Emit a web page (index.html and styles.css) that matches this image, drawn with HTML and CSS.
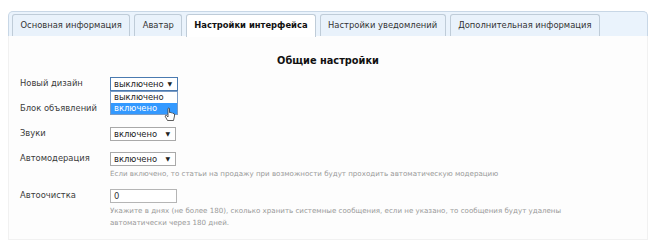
FILE: index.html
```html
<!DOCTYPE html>
<html>
<head>
<meta charset="utf-8">
<link rel="stylesheet" href="styles.css">
</head>
<body>
<div class="tabs">
  <div class="tab">Основная информация</div>
  <div class="tab">Аватар</div>
  <div class="tab active">Настройки интерфейса</div>
  <div class="tab">Настройки уведомлений</div>
  <div class="tab">Дополнительная информация</div>
</div>
<div class="panel">
  <h2 class="title">Общие настройки</h2>
  <div class="form">
    <div class="row">
      <div class="label">Новый дизайн</div>
      <div class="field">
        <div class="select open">выключено<span class="arrow">▼</span>
          <div class="list">
            <div class="opt">выключено</div>
            <div class="opt sel">включено</div>
            <svg class="cursor" width="12" height="16" viewBox="0 0 12 16"><path d="M4 1.5 L4 10 L2.5 8.5 Q1.5 8 1 9 L3.5 13.5 L9.5 13.5 L10.5 9 L10.5 7 Q10 6 9 6.5 Q8.5 5.5 7.5 6 Q7 5 6 5.5 L5.5 5.5 L5.5 1.5 Q5 0.5 4 1.5 Z" fill="#fff" stroke="#333" stroke-width="0.8"/></svg>
          </div>
        </div>
      </div>
    </div>
    <div class="row">
      <div class="label">Блок объявлений</div>
      <div class="field"><div class="select hidden">включено<span class="arrow">▼</span></div></div>
    </div>
    <div class="row">
      <div class="label">Звуки</div>
      <div class="field"><div class="select">включено<span class="arrow">▼</span></div></div>
    </div>
    <div class="row with-hint">
      <div class="label">Автомодерация</div>
      <div class="field">
        <div class="select">включено<span class="arrow">▼</span></div>
        <div class="hint">Если включено, то статьи на продажу при возможности будут проходить автоматическую модерацию</div>
      </div>
    </div>
    <div class="row with-hint">
      <div class="label">Автоочистка</div>
      <div class="field">
        <div class="input">0</div>
        <div class="hint">Укажите в днях (не более 180), сколько хранить системные сообщения, если не указано, то сообщения будут удалены автоматически через 180 дней.</div>
      </div>
    </div>
  </div>
</div>
</body>
</html>
```
FILE: styles.css
```css
body {
  margin: 0;
  background: #ffffff;
  font-family: "DejaVu Sans", Verdana, sans-serif;
  font-size: 8.4px;
  color: #333;
}
.tabs {
  margin: 11px 8px 0;
  height: 22px;
  padding: 2px 3px 0;
  display: flex;
  gap: 4px;
  background: #eaf3fc;
  border: 1px solid #c8d7e6;
  border-bottom: none;
  border-radius: 5px 5px 0 0;
}
.tab {
  padding: 0 7.5px;
  line-height: 21px;
  height: 21px;
  background: #e9f2fb;
  border: 1px solid #bfccd8;
  border-bottom: none;
  border-radius: 3px 3px 0 0;
  color: #333;
  white-space: nowrap;
}
.tab.active {
  background: #ffffff;
  font-weight: bold;
  color: #111;
  height: 22px;
  padding: 0 7px;
}
.panel {
  margin: 0 8px;
  height: 203px;
  background: #fdfdfd;
  border: 1px solid #f1f1f1;
  border-top: none;
  padding: 0 11px;
}
.title {
  margin: 0;
  padding-top: 19px;
  text-align: center;
  font-size: 9.8px;
  font-weight: bold;
  color: #111;
  height: 22px;
}
.form {
  display: flex;
  flex-direction: column;
}
.row {
  display: flex;
  margin-bottom: 11px;
}
.row.with-hint { margin-bottom: 9px; }
.label {
  width: 90px;
  flex: none;
  padding-top: 1px;
  color: #3a3a3a;
}
.field {
  flex: 1;
}
.select {
  position: relative;
  width: 61px;
  height: 12px;
  line-height: 12px;
  padding: 0 0 0 3px;
  border: 1px solid #a9a9a9;
  background: #fff;
  color: #222;
}
.select.open { border-color: #4a7ab0; width: 63px; }
.select.hidden { visibility: hidden; }
.arrow {
  position: absolute;
  right: 5px;
  top: 0;
  font-size: 6px;
}
.list {
  position: absolute;
  left: -1px;
  top: 13px;
  width: 66px;
  border: 1px solid #7a9cc6;
  background: #fff;
  z-index: 2;
}
.opt {
  padding-left: 3px;
  height: 11px;
  line-height: 11px;
}
.opt.sel {
  background: #3399ff;
  color: #fff;
}
.cursor {
  position: absolute;
  left: 53px;
  top: 15px;
}
.input {
  width: 62px;
  height: 12px;
  line-height: 12px;
  padding-left: 3px;
  border: 1px solid #b5b5b5;
  background: #fff;
}
.hint {
  color: #999;
  font-size: 7.1px;
  line-height: 12px;
  margin-top: 2px;
  max-width: 500px;
}
```
